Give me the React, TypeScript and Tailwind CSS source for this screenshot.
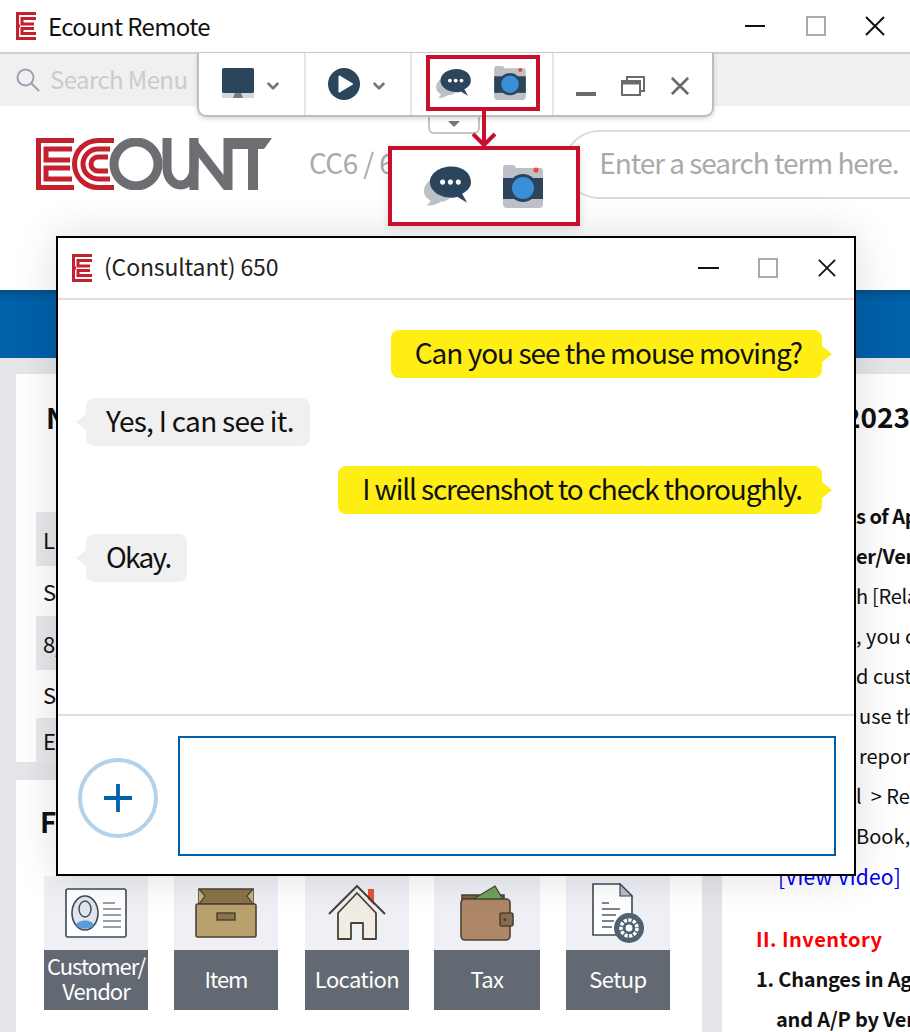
import { ChevronDown } from "lucide-react"

const SANS = "font-['Noto_Sans_CJK_KR','Noto_Sans',sans-serif]"

function EMark({ className }: { className: string }) {
  return (
    <svg viewBox="0 0 20 28" className={className} fill="none" stroke="#c4202e" strokeWidth="3">
      <path d="M20 1.5H1.5V26.5H20" />
      <path d="M20 6.5H6V12H18" />
      <path d="M20 21.5H6V16.5H18" />
      <path d="M1.5 14H4" />
    </svg>
  )
}

function BigLogo() {
  return (
    <svg viewBox="0 0 236 52" className="h-[52px] w-[236px]" fill="none">
      <g stroke="#c4202e" strokeWidth="5">
        <path d="M38 2.5H2.5V49.5H38" />
        <path d="M36 11H10V22H34" />
        <path d="M36 41H10V30H34" />
      </g>
      <g stroke="#c4202e" strokeWidth="5" strokeLinecap="butt">
        <path d="M78 2.5H62A23.5 23.5 0 0 0 62 49.5H78" />
        <path d="M74 11H62A15 15 0 0 0 62 41H74" />
        <path d="M72 19H62A7 7 0 0 0 62 33H72" />
      </g>
      <g stroke="#6d6e71">
        <circle cx="100" cy="26" r="22" strokeWidth="9" />
        <path d="M131 0V30A13.5 17 0 0 0 158 30V0" strokeWidth="9" />
        <path d="M158 52V6L192 50V0" strokeWidth="9" />
      </g>
      <path d="M196 0H236L228 11H222V52H212V11H196Z" fill="#6d6e71" />
    </svg>
  )
}

function ChatIcon({ className }: { className: string }) {
  return (
    <svg viewBox="0 0 48 40" className={className}>
      <path d="M14 12C6 12 0 18 0 25C0 30 3 33 7 35L3 40C10 40 14 38 17 36C25 36 30 30 30 24Z" fill="#bcc1c8" />
      <path d="M28 0C16 0 6 7 6 16C6 25 16 32 28 32C30 32 32 32 34 31L44 37L39 28C45 25 48 21 48 16C48 7 40 0 28 0Z" fill="#2b465c" />
      <circle cx="19" cy="16" r="2.6" fill="#fff" />
      <circle cx="27" cy="16" r="2.6" fill="#fff" />
      <circle cx="35" cy="16" r="2.6" fill="#fff" />
    </svg>
  )
}

function CameraIcon({ className }: { className: string }) {
  return (
    <svg viewBox="0 0 40 43" className={className}>
      <path d="M0 3Q0 0 3 0H10Q12 0 13 3H37Q40 3 40 6V39Q40 43 36 43H4Q0 43 0 39Z" fill="#bdc1c7" />
      <rect x="0" y="13" width="40" height="21" fill="#2b465c" />
      <circle cx="20" cy="23" r="14" fill="#2b465c" />
      <circle cx="20" cy="23" r="11" fill="#3a8fd6" />
      <circle cx="33" cy="5" r="2.6" fill="#f0483e" />
    </svg>
  )
}

function CloseIcon({ className, stroke = "#111", width = 2 }: { className: string; stroke?: string; width?: number }) {
  return (
    <svg viewBox="0 0 20 20" className={className} fill="none" stroke={stroke} strokeWidth={width}>
      <path d="M1 1L19 19M19 1L1 19" />
    </svg>
  )
}

function Toolbar() {
  return (
    <div className="absolute left-[197px] top-[53px] z-20 flex h-[64px] w-[517px] rounded-b-[9px] border-2 border-t-0 border-[#bdbdbd] bg-white shadow-[0_2px_5px_rgba(0,0,0,0.15)]">
      <div className="flex w-[107px] items-center border-r-2 border-[#e4e4e4] pl-[23px]">
        <svg viewBox="0 0 32 32" className="h-8 w-8">
          <rect x="0" y="0" width="32" height="25" rx="1.5" fill="#2b465c" />
          <rect x="0" y="25" width="32" height="5" fill="#d5d8dc" />
          <path d="M13 25H19L21 30H11Z" fill="#6f7f8c" />
        </svg>
        <ChevronDown className="ml-[10px] mt-1 h-[18px] w-[18px] text-[#777]" strokeWidth={3.5} />
      </div>
      <div className="flex w-[106px] items-center border-r-2 border-[#e4e4e4] pl-[22px]">
        <svg viewBox="0 0 32 32" className="h-8 w-8">
          <circle cx="16" cy="16" r="16" fill="#2b465c" />
          <path d="M11.5 8.5L24 16L11.5 23.5Z" fill="#fff" stroke="#fff" strokeWidth="2" strokeLinejoin="round" />
        </svg>
        <ChevronDown className="ml-[10px] mt-1 h-[18px] w-[18px] text-[#777]" strokeWidth={3.5} />
      </div>
      <div className="flex w-[142px] items-start border-r-2 border-[#e4e4e4] pl-[14px] pt-[2px]">
        <div className="flex h-[56px] w-[114px] items-center border-4 border-[#c8102e] pl-[6px]">
          <ChatIcon className="h-[29px] w-[35px]" />
          <CameraIcon className="ml-[23px] h-[34px] w-[32px]" />
        </div>
      </div>
      <div className="flex items-center pl-[22px] pt-1">
        <div className="mt-[16px] h-1 w-5 bg-[#6b6b6b]" />
        <svg viewBox="0 0 24 20" className="ml-[25px] h-5 w-6" fill="none" stroke="#6b6b6b" strokeWidth="2">
          <path d="M6 5V1H23V15H19" />
          <rect x="1" y="5" width="18" height="14" />
          <path d="M1 7H19" strokeWidth="3" />
        </svg>
        <CloseIcon className="ml-[26px] h-[18px] w-[18px]" stroke="#6b6b6b" width={3} />
      </div>
    </div>
  )
}

function Bubble({ text, tracking, mine }: { text: string; tracking: string; mine?: boolean }) {
  return (
    <div className={`relative flex h-[48px] items-center rounded-lg pb-1 text-[28px] text-[#111] ${tracking} ${mine ? "bg-[#ffee14] pl-6 pr-5" : "bg-[#f0f0f0] pl-5 pr-4"}`}>
      <div
        className={`absolute top-[16px] h-0 w-0 border-y-8 border-y-transparent ${
          mine ? "right-[-10px] border-l-10 border-l-[#ffee14]" : "left-[-10px] border-r-10 border-r-[#f0f0f0]"
        }`}
      />
      {text}
    </div>
  )
}

function ChatWindow() {
  return (
    <div className={`absolute left-[56px] top-[236px] z-10 flex h-[640px] w-[800px] flex-col border-2 border-black bg-white shadow-[0_0_40px_rgba(0,0,0,0.14)]`}>
      <div className="flex h-[62px] shrink-0 items-center border-b-2 border-[#dedede] pl-[14px]">
        <EMark className="h-[28px] w-5" />
        <span className="mb-1 ml-3 text-[23px] tracking-[-0.15px] text-[#222]">(Consultant) 650</span>
        <div className="ml-auto flex items-center pr-[18px]">
          <div className="h-[2px] w-[21px] bg-[#111]" />
          <div className="ml-[39px] h-5 w-5 border-2 border-[#aaa]" />
          <CloseIcon className="ml-[40px] h-[18px] w-[18px]" />
        </div>
      </div>
      <div className="flex flex-1 flex-col gap-5 pl-[28px] pr-[32px] pt-[30px]">
        <div className="flex justify-end"><Bubble mine tracking="tracking-[-1px]" text="Can you see the mouse moving?" /></div>
        <div className="flex"><Bubble tracking="tracking-[-0.7px]" text="Yes, I can see it." /></div>
        <div className="flex justify-end"><Bubble mine tracking="tracking-[-1.15px]" text="I will screenshot to check thoroughly." /></div>
        <div className="flex"><Bubble tracking="tracking-[-1.7px]" text="Okay." /></div>
      </div>
      <div className="flex h-[160px] shrink-0 gap-5 border-t-2 border-[#dedede] pl-[20px] pr-[18px] pt-5">
        <div className="mt-[22px] flex h-[80px] w-[80px] shrink-0 items-center justify-center rounded-full border-4 border-[#b3d1e8]">
          <svg viewBox="0 0 28 28" className="h-7 w-7" stroke="#0060a8" strokeWidth="3.8" strokeLinecap="round">
            <path d="M14 1V27M1 14H27" />
          </svg>
        </div>
        <div className="h-[120px] flex-1 border-2 border-[#0060a8]" />
      </div>
    </div>
  )
}

function Tile({ label, width, tracking, children }: { label: string; width: string; tracking: string; children: React.ReactNode }) {
  return (
    <div className={`flex h-[134px] flex-col ${width}`}>
      <div className="flex h-[74px] items-center justify-center bg-[#eff0f5]">{children}</div>
      <div className={`flex h-[60px] items-center justify-center bg-[#636973] pb-1 text-center text-[22px] leading-[25px] text-white ${tracking}`}>
        {label}
      </div>
    </div>
  )
}

function Tiles() {
  return (
    <div className="ml-7 flex">
      <Tile label="Customer/ Vendor" width="w-[104px]" tracking="tracking-[-1px]">
        <svg viewBox="0 0 62 50" className="h-[50px] w-[62px]">
          <rect x="1" y="1" width="60" height="48" rx="2" fill="#fff" stroke="#3d4a58" strokeWidth="1.6" />
          <ellipse cx="20" cy="25" rx="13" ry="17" fill="#dfe6ee" stroke="#3d4a58" strokeWidth="1.6" />
          <ellipse cx="20" cy="21" rx="6" ry="8" fill="#dfe6ee" stroke="#3d4a58" strokeWidth="1.4" />
          <path d="M11 37C13 31 27 31 29 37C26 42 14 42 11 37Z" fill="#5a9bd8" />
          <path d="M38 15H50M38 21H56M38 27H56M38 33H56M38 39H56" stroke="#9a9fa6" strokeWidth="2" />
        </svg>
      </Tile>
      <div className="ml-[26px]">
        <Tile label="Item" width="w-[104px]" tracking="tracking-[-1px]">
          <svg viewBox="0 0 62 50" className="h-[50px] w-[62px]">
            <path d="M4 1H58V16H4Z" fill="#8a7448" stroke="#4a4133" strokeWidth="1.6" />
            <path d="M4 1L10 8L4 16M58 1L52 8L58 16" fill="#c9b27b" stroke="#4a4133" strokeWidth="1.2" />
            <rect x="1" y="16" width="60" height="33" rx="1.5" fill="#b8a16d" stroke="#4a4133" strokeWidth="1.6" />
            <rect x="22" y="25" width="18" height="7" fill="#8a7448" stroke="#4a4133" strokeWidth="1.4" />
          </svg>
        </Tile>
      </div>
      <div className="ml-[27px]">
        <Tile label="Location" width="w-[104px]" tracking="tracking-[-0.6px]">
          <svg viewBox="0 0 58 56" className="h-[56px] w-[58px]">
            <path d="M40 4H46V20L40 14Z" fill="#e2533a" />
            <path d="M10 28V54H23V38H35V54H48V28L29 8Z" fill="#f0ede4" stroke="#4a4133" strokeWidth="1.8" strokeLinejoin="round" />
            <path d="M1 29L29 1L57 29" fill="none" stroke="#4a4133" strokeWidth="2" />
          </svg>
        </Tile>
      </div>
      <div className="ml-[25px]">
        <Tile label="Tax" width="w-[106px]" tracking="tracking-[-0.6px]">
          <svg viewBox="0 0 54 56" className="h-[56px] w-[54px]">
            <path d="M2 10H44V20H2Z" fill="#7d5f47" stroke="#4a4133" strokeWidth="1.6" />
            <path d="M10 16L35 1L44 16Z" fill="#6ea25b" stroke="#4a4133" strokeWidth="1.2" />
            <rect x="1" y="14" width="49" height="41" rx="4" fill="#ae8767" stroke="#4a4133" strokeWidth="1.6" />
            <rect x="40" y="28" width="13" height="13" rx="2" fill="#8a6a50" stroke="#4a4133" strokeWidth="1.6" />
            <circle cx="45" cy="34.5" r="1.6" fill="#4a4133" />
          </svg>
        </Tile>
      </div>
      <div className="ml-[26px]">
        <Tile label="Setup" width="w-[104px]" tracking="tracking-[-0.6px]">
          <svg viewBox="0 0 52 60" className="h-[60px] w-[52px]">
            <path d="M1 1H28L40 13V52H1Z" fill="#fff" stroke="#3d4a58" strokeWidth="1.6" />
            <path d="M28 1V13H40Z" fill="#b9bec5" stroke="#3d4a58" strokeWidth="1.2" />
            <path d="M10 20H17M10 26H28M10 32H24M10 38H22M10 44H20" stroke="#7d838b" strokeWidth="2" />
            <circle cx="37" cy="45" r="15" fill="#4f6173" />
            <circle cx="37" cy="45" r="8" fill="none" stroke="#fff" strokeWidth="3.5" strokeDasharray="3.2 1.4" />
            <circle cx="37" cy="45" r="3.4" fill="#fff" />
          </svg>
        </Tile>
      </div>
    </div>
  )
}

const tableRows = [
  { text: "L", height: "h-[54px]", shade: true },
  { text: "S", height: "h-[50px]", shade: false },
  { text: "8/", height: "h-[54px]", shade: true },
  { text: "S", height: "h-[48px]", shade: false },
  { text: "E", height: "h-[44px]", shade: true },
]

const noteLines = [
  { text: "s of April", margin: "ml-[134px]", weight: "font-bold tracking-[-0.5px]" },
  { text: "er/Vendor", margin: "ml-[134px]", weight: "font-bold tracking-[-0.3px]" },
  { text: "h [Relation]", margin: "ml-[134px]", weight: "tracking-[-0.3px]" },
  { text: ", you can", margin: "ml-[134px]", weight: "" },
  { text: "d customer", margin: "ml-[134px]", weight: "" },
  { text: "use the", margin: "ml-[137px]", weight: "" },
  { text: "report", margin: "ml-[137px]", weight: "" },
  { text: "l  > Report", margin: "ml-[134px]", weight: "" },
  { text: "Book, A", margin: "ml-[134px]", weight: "" },
]

export default function App() {
  return (
    <div className={`relative flex h-[1032px] w-[910px] flex-col overflow-hidden bg-white ${SANS}`}>
      <div className="flex h-[54px] shrink-0 items-center border-b-2 border-[#cfcfcf] pl-4">
        <EMark className="h-[28px] w-5" />
        <span className="ml-3 text-[24px] tracking-[-0.65px] text-[#111]">Ecount Remote</span>
        <div className="ml-auto flex items-center pr-[25px]">
          <div className="h-[2px] w-5 bg-[#111]" />
          <div className="ml-[41px] h-5 w-5 border-2 border-[#aaa]" />
          <CloseIcon className="ml-[39px] h-[20px] w-[20px]" />
        </div>
      </div>

      <div className="flex h-[52px] shrink-0 items-center bg-[#f0f0f0] pl-4">
        <svg viewBox="0 0 24 24" className="h-[24px] w-[24px]" fill="none" stroke="#98a0b4" strokeWidth="2">
          <circle cx="9.5" cy="9.5" r="8" />
          <path d="M15 15L23 23" />
        </svg>
        <span className="mb-[2px] ml-[10px] text-[24px] tracking-[-0.6px] text-[#cbcbcb]">Search Menu</span>
      </div>

      <div className="flex h-[184px] shrink-0 items-start pl-9 pt-8">
        <BigLogo />
        <span className="ml-[37px] mt-[3px] text-[28px] tracking-[-0.6px] text-[#aaa]">CC6 / 6</span>
        <div className="ml-[170px] mt-[-8px] flex h-[69px] flex-1 items-center rounded-l-[35px] border-y-2 border-l-2 border-[#d8dde2] pb-[6px] pl-[33px] text-[28px] tracking-[-1.05px] text-[#aaa]">
          Enter a search term here.
        </div>
      </div>

      <div className="h-[68px] shrink-0 bg-gradient-to-b from-[#00508c] from-0% to-[#0060a8] to-15%" />

      <div className="flex flex-1 gap-5 bg-[#e4e6ea] pl-4 pt-4">
        <div className="flex w-[686px] flex-col gap-[18px]">
          <div className="h-[388px] bg-white pl-5">
            <div className="pb-[74px] pt-[22px] pl-[10px] text-[28px] font-bold leading-[42px] text-[#111]">N</div>
            <div>
              {tableRows.map((row, i) => (
                <div key={i} className={`flex items-center pl-[7px] text-[22px] text-[#111] ${row.height} ${row.shade ? "bg-[#e8e9ed]" : ""}`}>
                  {row.text}
                </div>
              ))}
            </div>
          </div>
          <div className="flex-1 bg-white">
            <div className="pl-6 pt-[20px] pb-[34px] text-[28px] font-bold leading-[42px] text-[#111]">F</div>
            <Tiles />
          </div>
        </div>
        <div className="flex-1 overflow-hidden whitespace-pre bg-white pt-[21px] text-[20px] leading-[40px] text-[#111]">
          <div className="ml-[122px] h-[101px] text-[28px] font-bold leading-[42px]">2023</div>
          {noteLines.map((line, i) => (
            <div key={i} className={`${line.margin} ${line.weight}`}>{line.text}</div>
          ))}
          <div className="ml-[56px] text-[21px] tracking-[0.2px] text-[#0000ee]">[View Video]</div>
          <div className="ml-[34px] mt-[23px] font-bold tracking-[0.45px] text-[#ff0000]">II. Inventory</div>
          <div className="ml-[34px] font-bold tracking-[-0.2px]">1. Changes in Aging</div>
          <div className="ml-[54px] font-bold tracking-[-0.2px]">and A/P by Vendor</div>
        </div>
      </div>

      <Toolbar />
      <div className="absolute left-[428px] top-[116px] z-[15] flex h-[18px] w-[52px] items-center justify-center rounded-b-md border-2 border-t-0 border-[#c4c4c4] bg-white">
        <div className="h-0 w-0 border-x-[6px] border-t-[6px] border-x-transparent border-t-[#777]" />
      </div>

      <div className="absolute left-[388px] top-[146px] z-30 flex h-[80px] w-[192px] items-center border-4 border-[#c8102e] bg-white pl-[32px] shadow-[0_2px_8px_rgba(0,0,0,0.12)]">
        <ChatIcon className="h-[40px] w-[47px]" />
        <CameraIcon className="ml-[32px] h-[43px] w-[40px]" />
      </div>
      <svg viewBox="0 0 26 40" className="absolute left-[471px] top-[110px] z-30 h-[40px] w-[26px]" fill="none" stroke="#c8102e" strokeWidth="4">
        <path d="M13 0V36M2 24L13 35L24 24" />
      </svg>

      <ChatWindow />
    </div>
  )
}
